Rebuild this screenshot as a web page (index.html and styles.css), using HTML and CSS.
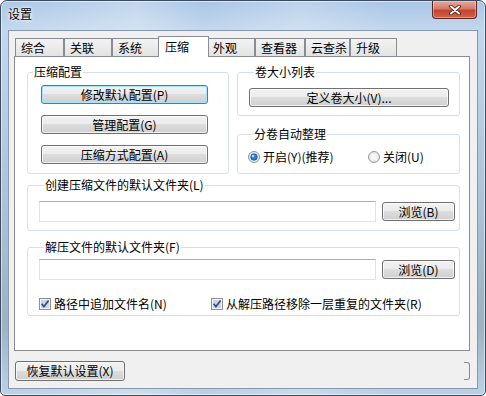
FILE: index.html
```html
<!DOCTYPE html>
<html>
<head>
  <meta charset="utf-8">
  <title>设置</title>
  <link rel="stylesheet" href="styles.css">
</head>
<body>
  <div class="window">
    <div class="titlebar">
      <span class="title">设置</span>
      <span class="close">
        <svg width="14" height="10" viewBox="0 0 14 10">
          <path d="M3 1.5 L11 8.5 M11 1.5 L3 8.5" stroke="#3d1712" stroke-width="3.6" stroke-linecap="round"/>
          <path d="M3 1.5 L11 8.5 M11 1.5 L3 8.5" stroke="#fff" stroke-width="2" stroke-linecap="round"/>
        </svg>
      </span>
    </div>

    <div class="client">
      <div class="tabs">
        <div class="tab w49">综合</div>
        <div class="tab">关联</div>
        <div class="tab">系统</div>
        <div class="tab active">压缩</div>
        <div class="tab">外观</div>
        <div class="tab w50">查看器</div>
        <div class="tab w45">云查杀</div>
        <div class="tab w47">升级</div>
      </div>

      <div class="panel">
        <div class="top-row">
          <fieldset class="group g-config">
            <legend>压缩配置</legend>
            <div class="btn-stack">
              <button class="btn btn-default">修改默认配置(P)</button>
              <button class="btn">管理配置(G)</button>
              <button class="btn">压缩方式配置(A)</button>
            </div>
          </fieldset>

          <div class="col-right">
            <fieldset class="group g-vol">
              <legend>卷大小列表</legend>
              <button class="btn btn-vol">定义卷大小(V)...</button>
            </fieldset>
            <fieldset class="group g-split">
              <legend>分卷自动整理</legend>
              <div class="radio-row">
                <label class="opt opt-on">
                  <svg width="12" height="12" viewBox="0 0 12 12">
                    <circle cx="6" cy="6" r="5.5" fill="#eceef1" stroke="#8e9197"/>
                    <circle cx="6" cy="6" r="3.3" fill="#2c7cc8" stroke="#1b4e8c" stroke-width="0.7"/>
                    <circle cx="5.1" cy="5.1" r="1.3" fill="#a8dcff"/>
                  </svg>
                  <span>开启(Y)(推荐)</span>
                </label>
                <label class="opt">
                  <svg width="12" height="12" viewBox="0 0 12 12">
                    <circle cx="6" cy="6" r="5.5" fill="#e4e5e7" stroke="#9a9ca1"/>
                    <circle cx="6" cy="6" r="3.6" fill="#f6f6f7"/>
                  </svg>
                  <span>关闭(U)</span>
                </label>
              </div>
            </fieldset>
          </div>
        </div>

        <fieldset class="group g-create">
          <legend>创建压缩文件的默认文件夹(L)</legend>
          <div class="path-row">
            <input type="text" class="path">
            <button class="btn btn-browse">浏览(B)</button>
          </div>
        </fieldset>

        <fieldset class="group g-extract">
          <legend>解压文件的默认文件夹(F)</legend>
          <div class="path-row">
            <input type="text" class="path">
            <button class="btn btn-browse">浏览(D)</button>
          </div>
          <div class="check-row">
            <label class="opt opt-path">
              <svg width="12" height="12" viewBox="0 0 12 12">
                <rect x="0.5" y="0.5" width="11" height="11" fill="#f3f4f6" stroke="#8e8f8f"/>
                <rect x="2" y="2" width="8" height="8" fill="#cdd5e0"/>
                <path d="M2.6 5.8 L4.9 8.6 L9.6 2.6" fill="none" stroke="#2b4e92" stroke-width="1.7"/>
              </svg>
              <span>路径中追加文件名(N)</span>
            </label>
            <label class="opt">
              <svg width="12" height="12" viewBox="0 0 12 12">
                <rect x="0.5" y="0.5" width="11" height="11" fill="#f3f4f6" stroke="#8e8f8f"/>
                <rect x="2" y="2" width="8" height="8" fill="#cdd5e0"/>
                <path d="M2.6 5.8 L4.9 8.6 L9.6 2.6" fill="none" stroke="#2b4e92" stroke-width="1.7"/>
              </svg>
              <span>从解压路径移除一层重复的文件夹(R)</span>
            </label>
          </div>
        </fieldset>
      </div>

      <div class="footer">
        <button class="btn btn-reset">恢复默认设置(X)</button>
        <span class="btn-stub"></span>
      </div>
    </div>
  </div>
</body>
</html>
```

FILE: styles.css
```css
/* Settings dialog, Windows 7 look */
* {
  box-sizing: border-box;
}

body {
  margin: 0;
  font-family: "Noto Sans CJK SC", "Liberation Sans", sans-serif;
  font-size: 12px;
  color: #000;
}

.window {
  width: 486px;
  height: 396px;
  display: flex;
  flex-direction: column;
  padding-bottom: 6px;
  border: 1px solid #3a4a5f;
  border-radius: 7px 7px 5px 5px;
  overflow: hidden;
  box-shadow: inset 0 0 0 1px rgba(255, 255, 255, 0.55);
  background:
    linear-gradient(to right, rgba(255, 255, 255, 0) 0, rgba(255, 255, 255, 0.28) 28%, rgba(255, 255, 255, 0) 42%, rgba(255, 255, 255, 0.22) 62%, rgba(255, 255, 255, 0) 80%),
    linear-gradient(to bottom, #a9c6e6 0, #c2d7ed 28px, #aec5dc 45%, #9cb2c2 82%, #bcd1e6 100%);
}

/* title bar */
.titlebar {
  height: 29px;
  flex: none;
  display: flex;
  align-items: flex-start;
  padding-left: 7px;
}

.title {
  margin-top: 6px;
  line-height: 14px;
  text-shadow: 0 0 5px #fff, 0 0 3px #fff;
}

.close {
  margin-left: auto;
  margin-right: 8px;
  width: 45px;
  height: 18px;
  display: flex;
  align-items: center;
  justify-content: center;
  padding-top: 1px;
  border: 1px solid #5b2a22;
  border-top: none;
  border-radius: 0 0 4px 4px;
  background: linear-gradient(#e9a99a 0, #d47a68 45%, #c2432e 55%, #d4624b 100%);
  box-shadow: inset 0 0 0 1px rgba(255, 220, 210, 0.45);
}

/* client area */
.client {
  flex: 1;
  margin: 0 7px;
  border: 1px solid #8598af;
  background: #f0f0f0;
}

.tabs {
  display: flex;
  align-items: flex-end;
  height: 20px;
  margin-top: 5px;
  padding-left: 6px;
}

.tab {
  width: 48px;
  height: 18px;
  padding: 2px 0 0 5px;
  line-height: 14px;
  white-space: nowrap;
  border: 1px solid #898c95;
  border-bottom: none;
  background: linear-gradient(#f3f3f3, #e3e3e3);
}

.tab.w49 { width: 49px; }
.tab.w50 { width: 50px; }
.tab.w45 { width: 45px; }
.tab.w47 { width: 47px; }

.tab.active {
  position: relative;
  z-index: 1;
  width: 51px;
  height: 21px;
  margin: 0 -2px -1px;
  padding: 3px 0 0 6px;
  background: #fff;
}

.panel {
  width: 456px;
  height: 295px;
  margin-left: 5px;
  padding: 8px 9px 0 12px;
  border: 1px solid #898c95;
  background: #fff;
}

/* group boxes */
.group {
  margin: 0;
  padding: 0;
  min-width: 0;
  border: 1px solid #d5dfe5;
  border-radius: 3px;
}

.group legend {
  margin-left: 5px;
  padding: 0 1px;
  line-height: 14px;
}

.top-row {
  display: flex;
  gap: 8px;
}

.g-config {
  width: 202px;
  height: 109px;
}

.btn-stack {
  display: flex;
  flex-direction: column;
  gap: 11px;
  padding: 6px 0 0 13px;
}

.btn-stack .btn {
  width: 167px;
}

.col-right {
  width: 223px;
  display: flex;
  flex-direction: column;
  gap: 11px;
}

.g-vol {
  height: 51px;
  padding: 9px 0 0 11px;
}

.btn-vol {
  width: 200px;
}

.g-split {
  height: 47px;
  padding: 9px 0 0 10px;
}

.radio-row,
.check-row {
  display: flex;
  line-height: 14px;
}

.opt {
  display: flex;
  align-items: center;
  gap: 3px;
  white-space: nowrap;
}

.opt-on {
  width: 120px;
}

.g-create {
  height: 53px;
  margin-top: 4px;
  padding: 9px 0 0 11px;
}

.g-extract {
  height: 76px;
  margin-top: 9px;
  padding: 5px 0 0 11px;
}

.path-row {
  display: flex;
  align-items: center;
  gap: 6px;
}

.path {
  width: 337px;
  height: 21px;
  margin: 0;
  border: 1px solid #dfe3e9;
  border-top-color: #abadb3;
  background: #fff;
}

.btn-browse {
  width: 73px;
}

.check-row {
  margin-top: 17px;
}

.opt-path {
  width: 172px;
}

/* buttons */
.btn {
  height: 19px;
  margin: 0;
  padding: 0;
  font: inherit;
  line-height: 14px;
  color: #000;
  border: 1px solid #707070;
  border-radius: 3px;
  background: linear-gradient(#f2f2f2 0, #ebebeb 49%, #dddddd 50%, #cfcfcf 100%);
  box-shadow: inset 0 0 0 1px rgba(255, 255, 255, 0.7);
}

.btn-default {
  border-color: #3c7fb1;
  box-shadow: inset 0 0 0 1px #a6e4fb;
}

.footer {
  display: flex;
  justify-content: space-between;
  padding: 10px 7px 0 6px;
}

.btn-reset {
  width: 110px;
  height: 20px;
}

.btn-stub {
  width: 6px;
  height: 18px;
  margin-top: 1px;
  border: 1px solid #8a8a8a;
  border-left: none;
  border-radius: 0 3px 3px 0;
}
```
